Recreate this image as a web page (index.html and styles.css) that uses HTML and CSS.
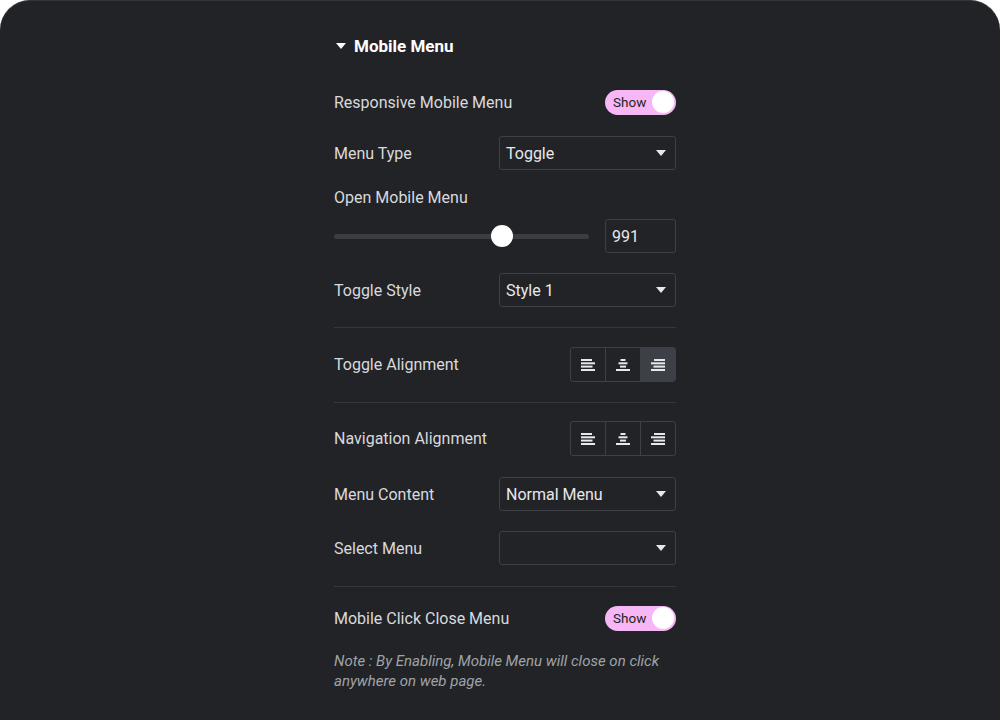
FILE: index.html
```html
<!DOCTYPE html>
<html>
<head>
<meta charset="utf-8">
<link rel="stylesheet" href="styles.css">
</head>
<body>
<div class="panel">
  <div class="col">
    <div class="title">
      <svg class="caret" width="10" height="6" viewBox="0 0 10 6"><path d="M0 0H10L5 6Z" fill="#fff"/></svg>
      <span>Mobile Menu</span>
    </div>

    <div class="row r-toggle1">
      <span class="label">Responsive Mobile Menu</span>
      <div class="switch"><span class="sw-text">Show</span><span class="knob"></span></div>
    </div>

    <div class="row r-select">
      <span class="label">Menu Type</span>
      <div class="select"><span>Toggle</span><svg class="arrow" width="10" height="6" viewBox="0 0 10 6"><path d="M0 0H10L5 6Z" fill="#e6e8ea"/></svg></div>
    </div>

    <div class="label-line">Open Mobile Menu</div>
    <div class="row r-slider">
      <div class="slider"><div class="track"></div><div class="thumb"></div></div>
      <div class="num">991</div>
    </div>

    <div class="row r-select2">
      <span class="label">Toggle Style</span>
      <div class="select"><span>Style 1</span><svg class="arrow" width="10" height="6" viewBox="0 0 10 6"><path d="M0 0H10L5 6Z" fill="#e6e8ea"/></svg></div>
    </div>

    <div class="divider d1"></div>

    <div class="row r-align1">
      <span class="label">Toggle Alignment</span>
      <div class="btn-group">
        <div class="btn"><svg width="14" height="12" viewBox="0 0 14 12"><rect x="0" y="0" width="11" height="2" fill="#e6e8ea"/><rect x="0" y="3.3" width="14" height="2" fill="#e6e8ea"/><rect x="0" y="6.6" width="11.5" height="2" fill="#e6e8ea"/><rect x="0" y="10" width="14" height="2" fill="#e6e8ea"/></svg></div>
        <div class="btn"><svg width="14" height="12" viewBox="0 0 14 12"><rect x="4.5" y="0" width="5" height="2" fill="#e6e8ea"/><rect x="2.5" y="3.3" width="9" height="2" fill="#e6e8ea"/><rect x="4" y="6.6" width="6" height="2" fill="#e6e8ea"/><rect x="0" y="10" width="14" height="2" fill="#e6e8ea"/></svg></div>
        <div class="btn active"><svg width="14" height="12" viewBox="0 0 14 12"><rect x="3" y="0" width="11" height="2" fill="#e6e8ea"/><rect x="0" y="3.3" width="14" height="2" fill="#e6e8ea"/><rect x="2.5" y="6.6" width="11.5" height="2" fill="#e6e8ea"/><rect x="0" y="10" width="14" height="2" fill="#e6e8ea"/></svg></div>
      </div>
    </div>

    <div class="divider d2"></div>

    <div class="row r-align2">
      <span class="label">Navigation Alignment</span>
      <div class="btn-group">
        <div class="btn"><svg width="14" height="12" viewBox="0 0 14 12"><rect x="0" y="0" width="11" height="2" fill="#e6e8ea"/><rect x="0" y="3.3" width="14" height="2" fill="#e6e8ea"/><rect x="0" y="6.6" width="11.5" height="2" fill="#e6e8ea"/><rect x="0" y="10" width="14" height="2" fill="#e6e8ea"/></svg></div>
        <div class="btn"><svg width="14" height="12" viewBox="0 0 14 12"><rect x="4.5" y="0" width="5" height="2" fill="#e6e8ea"/><rect x="2.5" y="3.3" width="9" height="2" fill="#e6e8ea"/><rect x="4" y="6.6" width="6" height="2" fill="#e6e8ea"/><rect x="0" y="10" width="14" height="2" fill="#e6e8ea"/></svg></div>
        <div class="btn"><svg width="14" height="12" viewBox="0 0 14 12"><rect x="3" y="0" width="11" height="2" fill="#e6e8ea"/><rect x="0" y="3.3" width="14" height="2" fill="#e6e8ea"/><rect x="2.5" y="6.6" width="11.5" height="2" fill="#e6e8ea"/><rect x="0" y="10" width="14" height="2" fill="#e6e8ea"/></svg></div>
      </div>
    </div>

    <div class="row r-select3">
      <span class="label">Menu Content</span>
      <div class="select"><span>Normal Menu</span><svg class="arrow" width="10" height="6" viewBox="0 0 10 6"><path d="M0 0H10L5 6Z" fill="#e6e8ea"/></svg></div>
    </div>

    <div class="row r-select4">
      <span class="label">Select Menu</span>
      <div class="select"><span></span><svg class="arrow" width="10" height="6" viewBox="0 0 10 6"><path d="M0 0H10L5 6Z" fill="#e6e8ea"/></svg></div>
    </div>

    <div class="divider d3"></div>

    <div class="row r-toggle2">
      <span class="label">Mobile Click Close Menu</span>
      <div class="switch"><span class="sw-text">Show</span><span class="knob"></span></div>
    </div>

    <p class="note">Note : By Enabling, Mobile Menu will close on click anywhere on web page.</p>
  </div>
</div>
</body>
</html>
```

FILE: styles.css
```css
html, body {
  margin: 0;
  padding: 0;
  background: #ffffff;
}
body {
  width: 1000px;
  height: 721px;
  overflow: hidden;
  font-family: Roboto, "Liberation Sans", sans-serif;
}
.panel {
  height: 720px;
  background: #222327;
  border-radius: 30px 30px 0 0;
  border-top: 1px solid #34363b;
  box-sizing: border-box;
  padding-top: 33px;
}
.col {
  width: 342px;
  margin-left: 334px;
  display: flex;
  flex-direction: column;
}
.title {
  display: flex;
  align-items: center;
  height: 24px;
  color: #ffffff;
  font-weight: 700;
  font-size: 17px;
}
.caret {
  margin-left: 2px;
  margin-right: 8px;
}
.row {
  display: flex;
  align-items: center;
  justify-content: space-between;
}
.label, .label-line {
  color: #d8dadd;
  font-size: 16px;
}
.label-line {
  line-height: 20px;
  margin-top: 18px;
}
.r-toggle1 { margin-top: 31px; height: 26px; }
.r-select { margin-top: 21px; height: 34px; }
.r-slider { margin-top: 11px; height: 34px; }
.r-select2 { margin-top: 20px; height: 34px; }
.d1 { margin-top: 20px; }
.r-align1 { margin-top: 19px; height: 35px; }
.d2 { margin-top: 20px; }
.r-align2 { margin-top: 18px; height: 35px; }
.r-select3 { margin-top: 21px; height: 34px; }
.r-select4 { margin-top: 20px; height: 34px; }
.d3 { margin-top: 21px; }
.r-toggle2 { margin-top: 18px; height: 26px; }

.switch {
  width: 71px;
  height: 25px;
  border-radius: 13px;
  background: #f7b6f6;
  display: flex;
  align-items: center;
  justify-content: space-between;
  box-sizing: border-box;
  padding: 0 2px 0 8px;
}
.sw-text {
  color: #1f1f23;
  font-size: 13.5px;
}
.knob {
  width: 22px;
  height: 22px;
  border-radius: 50%;
  background: #ffffff;
}
.select {
  width: 177px;
  height: 34px;
  box-sizing: border-box;
  border: 1px solid #3e4046;
  border-radius: 3px;
  display: flex;
  align-items: center;
  justify-content: space-between;
  padding: 0 9px 0 6px;
  color: #e6e8ea;
  font-size: 16px;
}
.slider {
  position: relative;
  width: 255px;
  height: 22px;
  display: flex;
  align-items: center;
}
.track {
  width: 100%;
  height: 5px;
  border-radius: 3px;
  background: #3b3d43;
}
.thumb {
  position: absolute;
  left: 157px;
  top: 0;
  width: 22px;
  height: 22px;
  border-radius: 50%;
  background: #ffffff;
}
.num {
  width: 71px;
  height: 34px;
  box-sizing: border-box;
  border: 1px solid #3e4046;
  border-radius: 3px;
  display: flex;
  align-items: center;
  padding-left: 6px;
  color: #e6e8ea;
  font-size: 16px;
}
.divider {
  height: 1px;
  background: #35373c;
}
.btn-group {
  display: flex;
  width: 106px;
  height: 35px;
  box-sizing: border-box;
  border: 1px solid #3e4046;
  border-radius: 3px;
  overflow: hidden;
}
.btn {
  flex: 1;
  display: flex;
  align-items: center;
  justify-content: center;
}
.btn + .btn {
  border-left: 1px solid #3e4046;
}
.btn.active {
  background: #3d4047;
}
.note {
  margin: 20px 0 0;
  color: #9fa3a9;
  font-style: italic;
  font-size: 15px;
  line-height: 20px;
}
```
